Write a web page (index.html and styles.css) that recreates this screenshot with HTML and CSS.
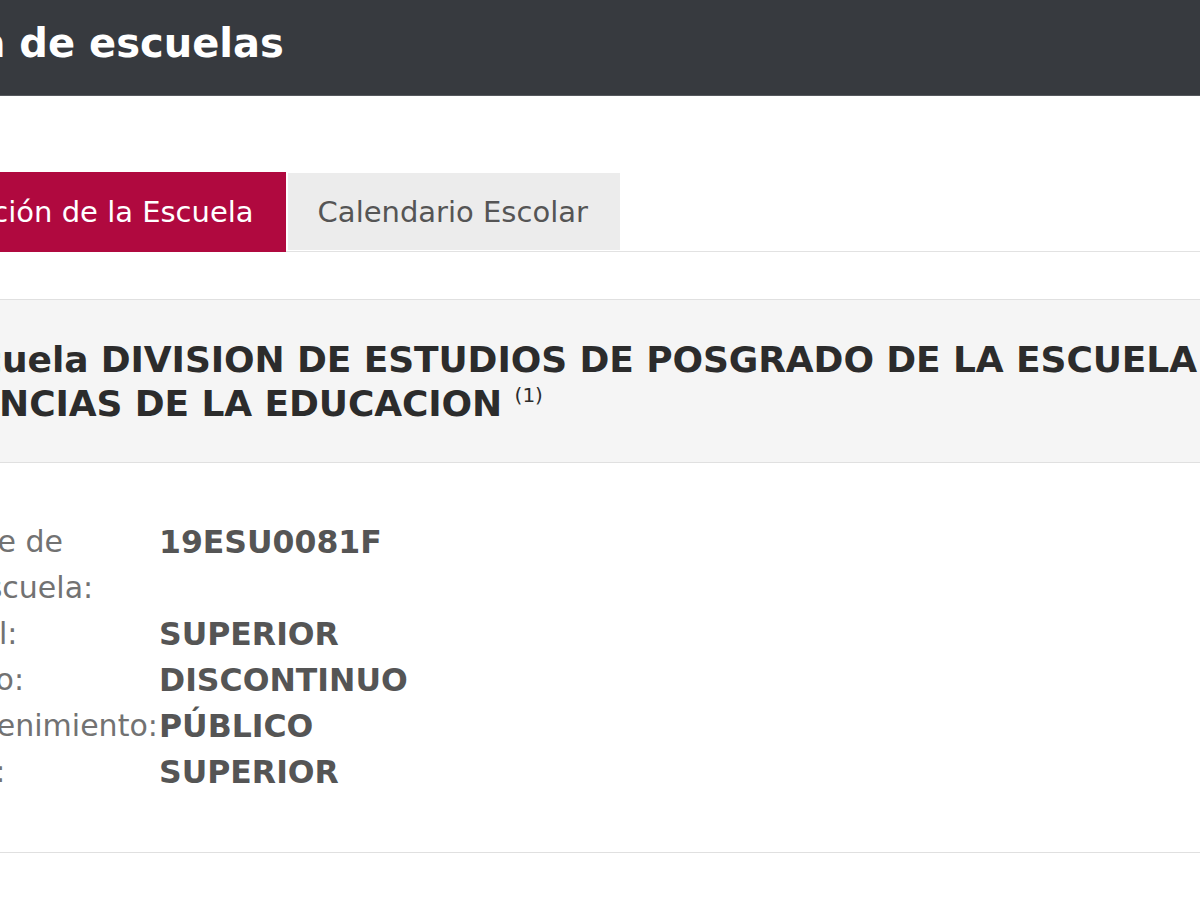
FILE: index.html
```html
<!DOCTYPE html>
<html lang="es">
<head>
    <meta charset="UTF-8">
    <meta name="viewport" content="width=device-width, initial-scale=1.0">
    <title>Consulta de escuelas</title>
    <link rel="stylesheet" href="styles.css">
</head>
<body>

    <div class="topbar">
        <h1>Consulta de escuelas</h1>
    </div>

    <div class="tabs">
        <div class="tab active">Información de la Escuela</div>
        <div class="tab">Calendario Escolar</div>
    </div>

    <div class="panel">
        <div class="panel-header">
            <h2>Escuela DIVISION DE ESTUDIOS DE POSGRADO DE LA ESCUELA DE<br>CIENCIAS DE LA EDUCACION <sup>(1)</sup></h2>
        </div>
        <div class="panel-body">
            <div class="info-row">
                <span class="label">Clave de la escuela:</span>
                <span class="value">19ESU0081F</span>
            </div>
            <div class="info-row">
                <span class="label">Nivel:</span>
                <span class="value">SUPERIOR</span>
            </div>
            <div class="info-row">
                <span class="label">Turno:</span>
                <span class="value">DISCONTINUO</span>
            </div>
            <div class="info-row">
                <span class="label">Sostenimiento:</span>
                <span class="value">PÚBLICO</span>
            </div>
            <div class="info-row">
                <span class="label">Tipo:</span>
                <span class="value">SUPERIOR</span>
            </div>
        </div>
    </div>

</body>
</html>
```

FILE: styles.css
```css
body {
    margin: 0;
    font-family: "DejaVu Sans", sans-serif;
    background-color: #fff;
    overflow: hidden;
}

.topbar {
    background-color: #373a3f;
    border-bottom: 1px solid #55585d;
    height: 96px;
    box-sizing: border-box;
    padding-top: 20px;
}

.topbar h1 {
    margin: 0 0 0 -192px;
    font-size: 40px;
    line-height: 46px;
    color: #fff;
    white-space: nowrap;
}

.tabs {
    display: flex;
    margin: 76px 0 0 -150px;
    border-bottom: 1px solid #e2e2e2;
}

.tab {
    box-sizing: border-box;
    padding: 0 32px 0 30px;
    display: flex;
    align-items: center;
    font-size: 29px;
    color: #555;
    background-color: #ececec;
    white-space: nowrap;
    margin: 1px 0 1px 2px;
    height: 77px;
}

.tab.active {
    background-color: #b0093f;
    color: #fff;
    margin: 0 0 -1px 0;
    height: 80px;
    padding: 0 32px 0 30px;
}

.panel {
    margin: 47px -20px 0 -100px;
    border: 1px solid #e0e0e0;
}

.panel-header {
    background-color: #f5f5f5;
    border-bottom: 1px solid #e0e0e0;
    padding: 38px 34px 36px;
}

.panel-header h2 {
    margin: 0;
    font-size: 36px;
    line-height: 44px;
    letter-spacing: -0.1px;
    color: #2c2c2c;
    white-space: nowrap;
}

.panel-header sup {
    font-size: 20px;
    font-weight: normal;
    letter-spacing: 0;
    vertical-align: 14px;
    line-height: 0;
}

.panel-body {
    padding: 56px 0 57px 31px;
}

.info-row {
    display: grid;
    grid-template-columns: 227px 1fr;
    line-height: 46px;
}

.label {
    max-width: 164px;
    font-size: 30px;
    color: #727272;
}

.info-row:nth-child(4) .label {
    white-space: nowrap;
}

.value {
    font-size: 31.5px;
    color: #555;
    font-weight: bold;
}
```
